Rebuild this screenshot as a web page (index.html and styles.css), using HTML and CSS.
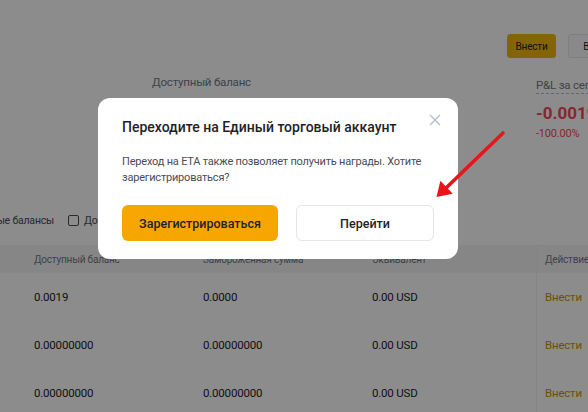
FILE: index.html
```html
<!DOCTYPE html>
<html lang="ru">
<head>
<meta charset="utf-8">
<title>ETA</title>
<link rel="stylesheet" href="styles.css">
</head>
<body>
<div class="page">
  <div class="actions">
    <button class="btn btn-primary">Внести</button>
    <button class="btn btn-outline">Вывести</button>
  </div>
  <div class="summary">
    <div class="card">
      <div class="label">Доступный баланс</div>
    </div>
    <div class="card">
      <div class="label label-dotted">P&amp;L за сегодня</div>
      <div class="pnl">-0.0019 USD</div>
      <div class="pnl-pct">-100.00%</div>
    </div>
  </div>
  <div class="filters">
    <div class="filter-first">Скрыть нулевые балансы</div>
    <span class="checkbox"></span>
    <span class="filter-text">Доступные балансы</span>
  </div>
  <div class="table">
    <div class="row head">
      <div class="cell">Доступный баланс</div>
      <div class="cell">Замороженная сумма</div>
      <div class="cell">Эквивалент</div>
      <div class="cell action">Действие</div>
    </div>
    <div class="row">
      <div class="cell">0.0019</div>
      <div class="cell">0.0000</div>
      <div class="cell">0.00 USD</div>
      <div class="cell action"><a>Внести</a><a>Вывести</a></div>
    </div>
    <div class="row">
      <div class="cell">0.00000000</div>
      <div class="cell">0.00000000</div>
      <div class="cell">0.00 USD</div>
      <div class="cell action"><a>Внести</a><a>Вывести</a></div>
    </div>
    <div class="row">
      <div class="cell">0.00000000</div>
      <div class="cell">0.00000000</div>
      <div class="cell">0.00 USD</div>
      <div class="cell action"><a>Внести</a><a>Вывести</a></div>
    </div>
  </div>
</div>

<div class="overlay"></div>

<div class="modal">
  <div class="modal-head">
    <div class="modal-title">Переходите на Единый торговый аккаунт</div>
    <svg class="close" width="12" height="12" viewBox="0 0 12 12"><path d="M1 1 L11 11 M11 1 L1 11" stroke="#b7bdc6" stroke-width="1.4" fill="none"/></svg>
  </div>
  <p class="modal-text">Переход на ETA также позволяет получить награды. Хотите зарегистрироваться?</p>
  <div class="modal-buttons">
    <button class="mbtn mbtn-yellow">Зарегистрироваться</button>
    <button class="mbtn mbtn-white">Перейти</button>
  </div>
</div>

<svg class="arrow" width="588" height="412" viewBox="0 0 588 412">
  <line x1="503" y1="133" x2="445" y2="189" stroke="#e8161b" stroke-width="3.6" stroke-linecap="round"/>
  <polygon points="436.5,197 440.4,180.8 452.8,193.8" fill="#e8161b"/>
</svg>
</body>
</html>
```
FILE: styles.css
```css
* { box-sizing: border-box; }
html, body { margin: 0; padding: 0; }
body {
  width: 588px;
  height: 412px;
  overflow: hidden;
  background: #ffffff;
  font-family: Roboto, "Noto Sans", sans-serif;
  color: #1e2329;
}
.page { width: 588px; overflow: hidden; }
.actions {
  display: flex;
  gap: 12px;
  padding: 34px 0 0 507px;
  white-space: nowrap;
}
.btn {
  height: 24px;
  padding: 0 9px;
  font-family: Roboto, sans-serif;
  font-size: 10px;
  letter-spacing: -0.2px;
  border-radius: 3px;
  flex: none;
}
.btn-primary { background: #f0b90b; border: 1px solid #f0b90b; color: #1e2329; width: 49px; padding: 0; }
.btn-outline { background: #fafafa; border: 1px solid #e6e8ea; color: #1e2329; width: 70px; }
.summary {
  display: grid;
  grid-template-columns: 384px auto;
  padding-left: 152px;
  margin-top: 16px;
  white-space: nowrap;
}
.label { font-size: 11.5px; line-height: 16px; color: #707a8a; letter-spacing: -0.2px; }
.label-dotted { display: inline-block; border-bottom: 1px dashed #b7bdc6; line-height: 15px; }
.pnl { margin-top: 9px; font-size: 17px; line-height: 20px; font-weight: 700; color: #f6465d; }
.pnl-pct { margin-top: 4px; font-size: 11px; line-height: 14px; color: #f6465d; letter-spacing: -0.2px; }
.filters {
  display: flex;
  align-items: center;
  margin-top: 71px;
  height: 16px;
  font-size: 10.5px;
  letter-spacing: -0.2px;
  color: #474d57;
  white-space: nowrap;
}
.filter-first { width: 54px; flex: none; display: flex; justify-content: flex-end; }
.checkbox {
  width: 11px; height: 11px;
  margin-left: 14px;
  border: 1px solid #474d57;
  border-radius: 2px;
  flex: none;
}
.filter-text { margin-left: 5px; }
.table { margin-top: 17px; }
.row {
  display: grid;
  grid-template-columns: 169px 169px 164px 1fr;
  padding-left: 34px;
  height: 48px;
  align-items: stretch;
  font-size: 11.5px;
  letter-spacing: -0.2px;
  color: #1e2329;
  white-space: nowrap;
}
.row.head { height: 28px; background: #f5f5f5; color: #707a8a; font-size: 10px; }
.cell { display: flex; align-items: center; overflow: hidden; }
.cell.action { border-left: 1px solid #f1f1f1; padding-left: 8px; gap: 6px; }
.cell.action a { color: #c99400; }
.cell.action a + a { border-left: 1px solid #c99400; padding-left: 6px; }
.overlay {
  position: fixed;
  inset: 0;
  background: rgba(0, 0, 0, 0.45);
}
.modal {
  position: absolute;
  left: 98px;
  top: 98px;
  width: 360px;
  height: 161px;
  background: #ffffff;
  border-radius: 12px;
  padding: 19px 24px 18px 24px;
}
.modal-head { display: flex; justify-content: space-between; align-items: flex-start; }
.modal-title { font-size: 14px; line-height: 20px; font-weight: 500; color: #1e2329; white-space: nowrap; }
.close { margin-top: -3px; margin-right: -7px; }
.modal-text {
  margin: 17px 0 0 0;
  font-size: 11px;
  line-height: 16px;
  letter-spacing: -0.2px;
  color: #474d57;
}
.modal-buttons {
  display: grid;
  grid-template-columns: 156px 1fr;
  gap: 18px;
  margin-top: 19px;
}
.mbtn {
  height: 36px;
  border-radius: 6px;
  font-family: Roboto, sans-serif;
  font-size: 12.5px;
  font-weight: 500;
  color: #1e2329;
}
.mbtn-yellow { background: #f7a600; border: none; }
.mbtn-white { background: #ffffff; border: 1px solid #e3e5e8; }
.arrow { position: absolute; left: 0; top: 0; pointer-events: none; }
```
